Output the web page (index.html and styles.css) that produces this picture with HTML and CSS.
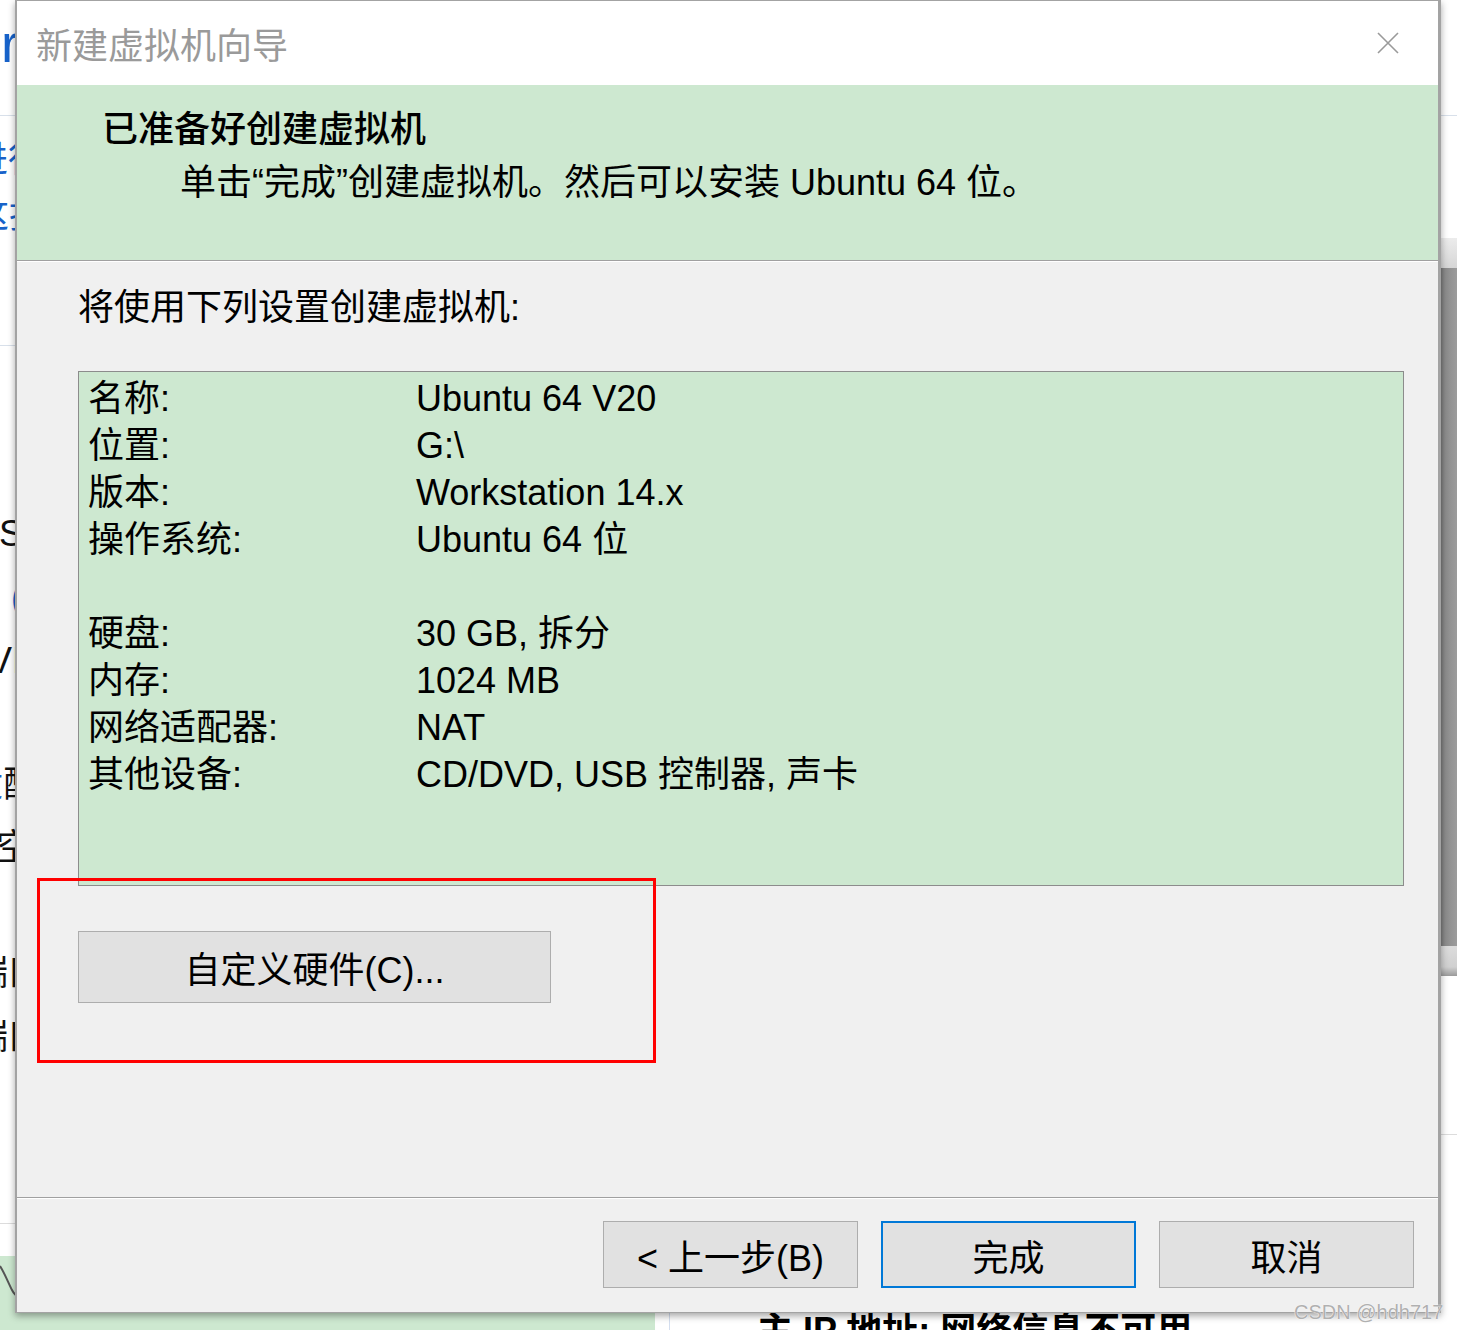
FILE: index.html
```html
<!DOCTYPE html>
<html lang="zh-CN">
<head>
    <meta charset="UTF-8">
    <title>新建虚拟机向导</title>
    <link rel="stylesheet" href="styles.css">
</head>
<body>
    <div class="desk">
        <!-- window behind the wizard -->
        <div class="backdrop">
            <span class="frag f-r">r</span>
            <div class="rule rule-top"></div>
            <span class="frag blue f-xing">进行</span>
            <span class="frag blue f-zhao">这找</span>
            <div class="rule rule-left1"></div>
            <span class="frag lightblue f-hao">号</span>
            <span class="frag f-sc">Sc</span>
            <span class="frag blue f-paren">(</span>
            <span class="frag f-vi">VI</span>
            <span class="frag f-pei"><span class="blue">适</span>配</span>
            <span class="frag f-kong">空</span>
            <span class="frag f-kou1">端口</span>
            <span class="frag f-kou2">端口</span>
            <span class="frag lightblue f-hao2">号</span>
            <div class="rule rule-left2"></div>
            <div class="green-block">
                <svg class="curve" width="20" height="40" viewBox="0 0 20 40"><path d="M0 6 C4 12 8 22 12 30 C14 34 16 36 19 37" fill="none" stroke="#555" stroke-width="2"/></svg>
            </div>
            <div class="vline"></div>
            <span class="ip-line">主 IP 地址: 网络信息不可用</span>
            <div class="photo">
                <div class="photo-top"></div>
                <div class="photo-mid"></div>
                <div class="photo-bot"></div>
            </div>
            <div class="rule rule-right"></div>
        </div>

        <div class="dialog">
            <div class="titlebar">
                <span class="title">新建虚拟机向导</span>
                <svg class="close" width="22" height="22" viewBox="0 0 22 22"><path d="M1 1 L21 21 M21 1 L1 21" stroke="#9a9a9a" stroke-width="1.6" fill="none"/></svg>
            </div>
            <div class="banner">
                <h1>已准备好创建虚拟机</h1>
                <p>单击“完成”创建虚拟机。然后可以安装 Ubuntu 64 位。</p>
            </div>
            <div class="content">
                <p class="intro">将使用下列设置创建虚拟机:</p>
                <div class="summary">
                    <span>名称:</span><span>Ubuntu 64 V20</span>
                    <span>位置:</span><span>G:\</span>
                    <span>版本:</span><span>Workstation 14.x</span>
                    <span>操作系统:</span><span>Ubuntu 64 位</span>
                    <span class="blank"></span><span class="blank"></span>
                    <span>硬盘:</span><span>30 GB, 拆分</span>
                    <span>内存:</span><span>1024 MB</span>
                    <span>网络适配器:</span><span>NAT</span>
                    <span>其他设备:</span><span>CD/DVD, USB 控制器, 声卡</span>
                </div>
                <button class="btn hw">自定义硬件(C)...</button>
            </div>
            <div class="footer">
                <button class="btn">&lt; 上一步(B)</button>
                <button class="btn primary">完成</button>
                <button class="btn">取消</button>
            </div>
        </div>

        <div class="mark"></div>
        <div class="watermark">CSDN @hdh717</div>
    </div>
</body>
</html>
```
FILE: styles.css
```css
body {
    margin: 0;
    width: 1457px;
    height: 1330px;
    overflow: hidden;
    background: #fff;
    font-family: "Liberation Sans", "Noto Sans CJK SC", sans-serif;
    color: #000;
}
.desk {
    position: relative;
    width: 1457px;
    height: 1330px;
    overflow: hidden;
}

/* background window */
.backdrop {
    position: absolute;
    inset: 0;
}
.frag {
    position: absolute;
    font-size: 36px;
    line-height: 36px;
    white-space: nowrap;
    color: #111;
}
.blue {
    color: #1762c9;
}
.lightblue {
    color: #5fb8f0;
}
.f-r {
    left: 1px;
    top: 16px;
    font-size: 54px;
    line-height: 54px;
    color: #1762c9;
}
.f-xing { left: -28px; top: 142px; }
.f-zhao { left: -27px; top: 198px; }
.f-hao { left: -30px; top: 455px; font-size: 30px; }
.f-sc { left: -1px; top: 516px; }
.f-paren { left: 11px; top: 580px; }
.f-vi { left: -12px; top: 643px; }
.f-pei { left: -33px; top: 767px; }
.f-kong { left: -4px; top: 830px; }
.f-kou1 { left: -28px; top: 955px; }
.f-kou2 { left: -28px; top: 1019px; }
.f-hao2 { left: -30px; top: 1082px; font-size: 30px; }
.rule {
    position: absolute;
    height: 1px;
    background: #d8e0ea;
}
.rule-top { left: 0; top: 115px; width: 1457px; }
.rule-left1 { left: 0; top: 345px; width: 20px; }
.rule-left2 { left: 0; top: 1223px; width: 20px; background: #dcdcdc; }
.rule-right { left: 1438px; top: 1134px; width: 19px; background: #dcdcdc; }
.green-block {
    position: absolute;
    left: 0;
    top: 1256px;
    width: 655px;
    height: 74px;
    background: #cde8d0;
}
.curve {
    display: block;
    margin-top: 4px;
}
.vline {
    position: absolute;
    left: 669px;
    top: 1300px;
    width: 1px;
    height: 30px;
    background: #d4deef;
}
.ip-line {
    position: absolute;
    left: 757px;
    top: 1313px;
    font-size: 36px;
    line-height: 36px;
    font-weight: bold;
    white-space: nowrap;
}
.photo {
    position: absolute;
    left: 1436px;
    top: 238px;
    width: 21px;
    display: flex;
    flex-direction: column;
}
.photo-top {
    height: 30px;
    background: linear-gradient(#ececec, #d6d6d6);
}
.photo-mid {
    height: 678px;
    background: linear-gradient(90deg, #646464, #8a8a8a 40%, #9c9c9c);
}
.photo-bot {
    height: 30px;
    background: linear-gradient(#dcdcdc, #d0d0d0 70%, #9a9a9a);
}

/* wizard dialog */
.dialog {
    position: absolute;
    left: 15px;
    top: 0;
    width: 1426px;
    height: 1313px;
    box-sizing: border-box;
    border: 1px solid #a3a3a3;
    border-left-width: 2px;
    border-right-width: 3px;
    background: #f0f0f0;
    display: flex;
    flex-direction: column;
    box-shadow: 0 3px 7px rgba(0, 0, 0, 0.35);
}
.titlebar {
    flex: none;
    height: 84px;
    background: #fff;
    display: flex;
    align-items: center;
    justify-content: space-between;
    padding: 0 39px 0 19px;
}
.title {
    font-size: 36px;
    color: #9a9a9a;
}
.banner {
    flex: none;
    height: 176px;
    box-sizing: border-box;
    background: #cde8d0;
    border-bottom: 1px solid #a0a0a0;
    padding: 21px 0 0 85px;
}
.banner h1 {
    margin: 0;
    font-size: 36px;
    line-height: 47px;
    font-weight: 500;
}
.banner p {
    margin: 6px 0 0 78px;
    font-size: 36px;
    line-height: 47px;
}
.content {
    flex: 1;
    border-top: 1px solid #fff;
    padding: 22px 34px 0 61px;
}
.intro {
    margin: 0 0 40px;
    font-size: 36px;
    line-height: 47px;
}
.summary {
    height: 515px;
    box-sizing: border-box;
    border: 1px solid #8c8c8c;
    background: #cde8d0;
    padding: 3px 9px;
    display: grid;
    grid-template-columns: 328px 1fr;
    grid-auto-rows: 47px;
    font-size: 36px;
    line-height: 47px;
}
.btn {
    font-family: inherit;
    font-size: 36px;
    color: #000;
    background: #e1e1e1;
    border: 1px solid #adadad;
    padding: 0;
    margin: 0;
}
.hw {
    display: block;
    margin-top: 45px;
    width: 473px;
    height: 72px;
}
.footer {
    flex: none;
    height: 115px;
    box-sizing: border-box;
    border-top: 1px solid #a0a0a0;
    box-shadow: inset 0 1px #fff;
    padding: 23px 24px 0 0;
    display: flex;
    justify-content: flex-end;
    align-items: flex-start;
    gap: 23px;
}
.footer .btn {
    width: 255px;
    height: 67px;
}
.btn.primary {
    border: 2px solid #0078d7;
}

/* annotation + watermark */
.mark {
    position: absolute;
    left: 37px;
    top: 878px;
    width: 619px;
    height: 185px;
    box-sizing: border-box;
    border: 3px solid #ff0000;
}
.watermark {
    position: absolute;
    left: 1294px;
    top: 1301px;
    font-size: 20px;
    line-height: 22px;
    color: #b0b0b0;
    text-shadow: 0 0 1px #fff, 0 0 1px #fff;
    white-space: nowrap;
}
```
